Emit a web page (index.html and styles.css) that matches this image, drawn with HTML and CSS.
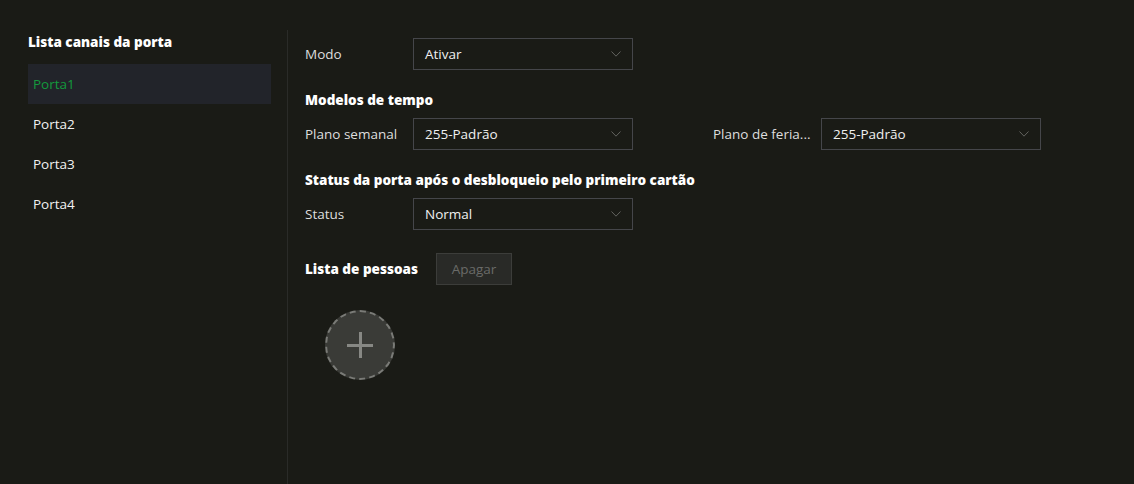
FILE: index.html
```html
<!DOCTYPE html>
<html lang="pt">
<head>
<meta charset="utf-8">
<title>Porta</title>
<link rel="stylesheet" href="styles.css">
</head>
<body>
<div class="layout">
  <aside class="sidebar">
    <div class="side-title">Lista canais da porta</div>
    <ul class="door-list">
      <li class="door active">Porta1</li>
      <li class="door">Porta2</li>
      <li class="door">Porta3</li>
      <li class="door">Porta4</li>
    </ul>
  </aside>
  <div class="divider"></div>
  <main class="content">
    <div class="row first">
      <div class="field">
        <span class="label">Modo</span>
        <div class="select"><span>Ativar</span><svg class="chev" width="10" height="6" viewBox="0 0 10 6"><path d="M0.5 0.5 L5 5.2 L9.5 0.5" fill="none" stroke="#62635f" stroke-width="1"/></svg></div>
      </div>
    </div>
    <div class="section-title">Modelos de tempo</div>
    <div class="row">
      <div class="field">
        <span class="label">Plano semanal</span>
        <div class="select"><span>255-Padrão</span><svg class="chev" width="10" height="6" viewBox="0 0 10 6"><path d="M0.5 0.5 L5 5.2 L9.5 0.5" fill="none" stroke="#62635f" stroke-width="1"/></svg></div>
      </div>
      <div class="field second">
        <span class="label">Plano de feria...</span>
        <div class="select"><span>255-Padrão</span><svg class="chev" width="10" height="6" viewBox="0 0 10 6"><path d="M0.5 0.5 L5 5.2 L9.5 0.5" fill="none" stroke="#62635f" stroke-width="1"/></svg></div>
      </div>
    </div>
    <div class="section-title">Status da porta após o desbloqueio pelo primeiro cartão</div>
    <div class="row">
      <div class="field">
        <span class="label">Status</span>
        <div class="select"><span>Normal</span><svg class="chev" width="10" height="6" viewBox="0 0 10 6"><path d="M0.5 0.5 L5 5.2 L9.5 0.5" fill="none" stroke="#62635f" stroke-width="1"/></svg></div>
      </div>
    </div>
    <div class="people-row">
      <span class="people-title">Lista de pessoas</span>
      <button class="btn-disabled" type="button">Apagar</button>
    </div>
    <div class="add-circle"><span class="plus"></span></div>
  </main>
</div>
</body>
</html>
```

FILE: styles.css
```css
* { box-sizing: border-box; }
html, body {
  margin: 0;
  padding: 0;
  background: #1a1b16;
  font-family: "Open Sans", "Noto Sans", sans-serif;
  font-size: 13.5px;
  color: #e8e8e8;
}
.layout {
  display: flex;
  height: 484px;
}
.sidebar {
  width: 287px;
  padding: 30px 16px 0 28px;
  flex: none;
}
.side-title {
  height: 24px;
  line-height: 24px;
  font-weight: 800;
  color: #ffffff;
}
.door-list {
  list-style: none;
  margin: 10px 0 0;
  padding: 0;
}
.door {
  height: 40px;
  line-height: 40px;
  padding-left: 5px;
  color: #f2f2f2;
}
.door.active {
  background: #22242a;
  color: #139a3d;
}
.divider {
  width: 1px;
  background: #2a2b28;
  margin-top: 30px;
  flex: none;
}
.content {
  flex: 1;
  padding: 38px 0 0 17px;
}
.row {
  display: flex;
  margin-top: 8px;
}
.row.first {
  margin-top: 0;
}
.field {
  display: flex;
  align-items: center;
}
.field.second {
  margin-left: 80px;
}
.label {
  width: 108px;
  color: #dedede;
  white-space: nowrap;
}
.select {
  width: 220px;
  height: 32px;
  border: 1px solid #45464a;
  display: flex;
  align-items: center;
  justify-content: space-between;
  padding: 0 11px 0 11px;
  color: #f0f0f0;
}
.chev {
  display: block;
}
.section-title {
  margin-top: 20px;
  height: 20px;
  line-height: 20px;
  font-weight: 800;
  color: #ffffff;
}
.people-row {
  display: flex;
  align-items: center;
  margin-top: 23px;
}
.people-title {
  width: 131px;
  font-weight: 800;
  color: #ffffff;
}
.btn-disabled {
  width: 76px;
  height: 32px;
  background: #292a27;
  border: 1px solid #3c3d3a;
  color: #6a6b68;
  font-family: inherit;
  font-size: 13.5px;
  padding: 0;
}
.add-circle {
  width: 70px;
  height: 70px;
  margin: 25px 0 0 20px;
  border-radius: 50%;
  border: 2px dashed #7a7b77;
  background: #3a3b37;
  position: relative;
}
.plus {
  position: absolute;
  left: 50%;
  top: 50%;
  width: 26px;
  height: 26px;
  transform: translate(-50%, -50%);
}
.plus::before,
.plus::after {
  content: "";
  position: absolute;
  background: #878884;
}
.plus::before {
  left: 0;
  top: 11.5px;
  width: 26px;
  height: 3px;
}
.plus::after {
  top: 0;
  left: 11.5px;
  width: 3px;
  height: 26px;
}
```
